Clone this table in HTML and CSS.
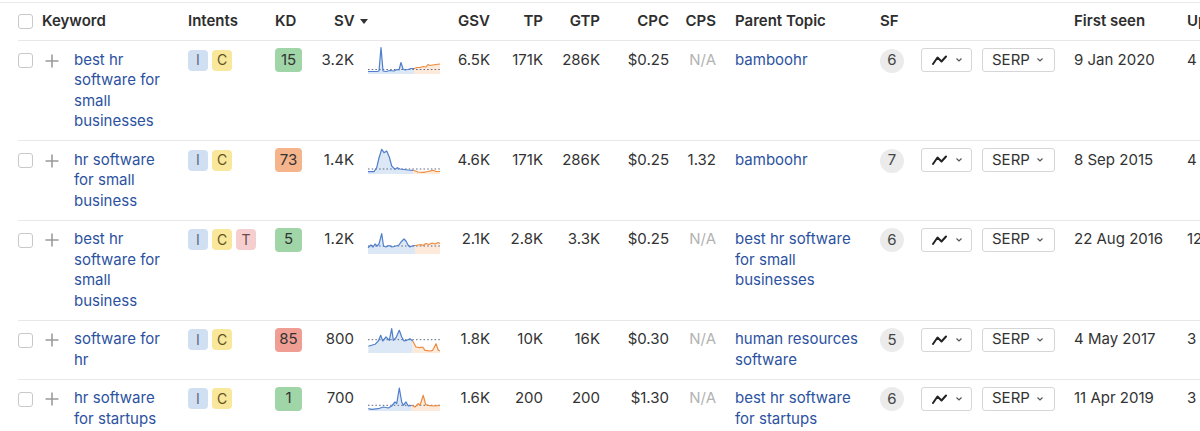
FILE: index.html
```html
<!DOCTYPE html>
<html lang="en">
<head>
<meta charset="utf-8">
<title>Keywords</title>
<link rel="stylesheet" href="styles.css">
</head>
<body>
<div class="page">
  <div class="table">
    <div class="row head">
      <div class="c sel span2"><span class="cb"></span><span>Keyword</span></div>
      <div class="c">Intents</div>
      <div class="c">KD</div>
      <div class="c sv-head span2">SV <svg class="sort" width="8" height="5" viewBox="0 0 8 5"><path d="M0 0H8L4 5Z" fill="#333"/></svg></div>
      <div class="c num">GSV</div>
      <div class="c num">TP</div>
      <div class="c num">GTP</div>
      <div class="c num">CPC</div>
      <div class="c num cps">CPS</div>
      <div class="c">Parent Topic</div>
      <div class="c">SF</div>
      <div class="c"></div>
      <div class="c"></div>
      <div class="c">First seen</div>
      <div class="c">Updated</div>
    </div>

    <!-- Row 1 -->
    <div class="row">
      <div class="c sel"><span class="cb"></span><svg class="plus" width="14" height="14" viewBox="0 0 14 14"><path d="M7 0.5V13.5M0.5 7H13.5" stroke="#9b9b9b" stroke-width="1.6"/></svg></div>
      <div class="c kw"><a href="#">best hr software for small businesses</a></div>
      <div class="c intents"><span class="it i">I</span><span class="it cc">C</span></div>
      <div class="c"><span class="kd green">15</span></div>
      <div class="c num">3.2K</div>
      <div class="c spark"><svg width="72" height="28" viewBox="0 0 72 28">
        <polygon class="fb" points="0,25.5 9,25.5 11,25 13,1.5 15,25 18,25.5 22,24.5 26,25 29,23.5 31,24 33,16.5 35,23 37,24 40,23.5 43,22.5 46,22.5 46,28 0,28"/>
        <polygon class="fo" points="46,22.5 49,21.5 52,21.5 55,20.5 58,21 60,18.5 62,19.5 65,19 68,18.5 72,18 72,28 46,28"/>
        <line class="dot" x1="0" y1="23.5" x2="72" y2="23.5"/>
        <polyline class="lb" points="0,25.5 9,25.5 11,25 13,1.5 15,25 18,25.5 22,24.5 26,25 29,23.5 31,24 33,16.5 35,23 37,24 40,23.5 43,22.5 46,22.5"/>
        <polyline class="lo" points="46,22.5 49,21.5 52,21.5 55,20.5 58,21 60,18.5 62,19.5 65,19 68,18.5 72,18"/>
      </svg></div>
      <div class="c num">6.5K</div>
      <div class="c num">171K</div>
      <div class="c num">286K</div>
      <div class="c num">$0.25</div>
      <div class="c num cps na">N/A</div>
      <div class="c parent"><a href="#">bamboohr</a></div>
      <div class="c"><span class="sf">6</span></div>
      <div class="c"><span class="btn chart"><svg width="15" height="10" viewBox="0 0 15 10"><polyline points="1,9 5.5,2.5 9.5,6.5 14,1.5" fill="none" stroke="#222" stroke-width="2" stroke-linejoin="round" stroke-linecap="round"/></svg><svg class="chev" width="6" height="4" viewBox="0 0 6 4"><polyline points="0.5,0.5 3,3 5.5,0.5" fill="none" stroke="#555" stroke-width="1.2"/></svg></span></div>
      <div class="c"><span class="btn serp">SERP<svg class="chev" width="6" height="4" viewBox="0 0 6 4"><polyline points="0.5,0.5 3,3 5.5,0.5" fill="none" stroke="#555" stroke-width="1.2"/></svg></span></div>
      <div class="c">9 Jan 2020</div>
      <div class="c">4 days</div>
    </div>

    <!-- Row 2 -->
    <div class="row">
      <div class="c sel"><span class="cb"></span><svg class="plus" width="14" height="14" viewBox="0 0 14 14"><path d="M7 0.5V13.5M0.5 7H13.5" stroke="#9b9b9b" stroke-width="1.6"/></svg></div>
      <div class="c kw"><a href="#">hr software for small business</a></div>
      <div class="c intents"><span class="it i">I</span><span class="it cc">C</span></div>
      <div class="c"><span class="kd orange">73</span></div>
      <div class="c num">1.4K</div>
      <div class="c spark"><svg width="72" height="28" viewBox="0 0 72 28">
        <polygon class="fb" points="0,25.7 6,25.7 8.7,21.7 11,12 13.7,3.3 16,6.7 18.7,5 21.3,11 23.7,20 27,23.3 29.3,21.7 32,23 36,23.5 40,24 45.3,24.3 45.3,28 0,28"/>
        <polygon class="fo" points="45.3,24.3 50,26 55,26.3 60,25.5 65,24.3 68,25.5 72,25.5 72,28 45.3,28"/>
        <line class="dot" x1="0" y1="23" x2="72" y2="23"/>
        <polyline class="lb" points="0,25.7 6,25.7 8.7,21.7 11,12 13.7,3.3 16,6.7 18.7,5 21.3,11 23.7,20 27,23.3 29.3,21.7 32,23 36,23.5 40,24 45.3,24.3"/>
        <polyline class="lo" points="45.3,24.3 50,26 55,26.3 60,25.5 65,24.3 68,25.5 72,25.5"/>
      </svg></div>
      <div class="c num">4.6K</div>
      <div class="c num">171K</div>
      <div class="c num">286K</div>
      <div class="c num">$0.25</div>
      <div class="c num cps">1.32</div>
      <div class="c parent"><a href="#">bamboohr</a></div>
      <div class="c"><span class="sf">7</span></div>
      <div class="c"><span class="btn chart"><svg width="15" height="10" viewBox="0 0 15 10"><polyline points="1,9 5.5,2.5 9.5,6.5 14,1.5" fill="none" stroke="#222" stroke-width="2" stroke-linejoin="round" stroke-linecap="round"/></svg><svg class="chev" width="6" height="4" viewBox="0 0 6 4"><polyline points="0.5,0.5 3,3 5.5,0.5" fill="none" stroke="#555" stroke-width="1.2"/></svg></span></div>
      <div class="c"><span class="btn serp">SERP<svg class="chev" width="6" height="4" viewBox="0 0 6 4"><polyline points="0.5,0.5 3,3 5.5,0.5" fill="none" stroke="#555" stroke-width="1.2"/></svg></span></div>
      <div class="c">8 Sep 2015</div>
      <div class="c">4 days</div>
    </div>

    <!-- Row 3 -->
    <div class="row">
      <div class="c sel"><span class="cb"></span><svg class="plus" width="14" height="14" viewBox="0 0 14 14"><path d="M7 0.5V13.5M0.5 7H13.5" stroke="#9b9b9b" stroke-width="1.6"/></svg></div>
      <div class="c kw"><a href="#">best hr software for small business</a></div>
      <div class="c intents"><span class="it i">I</span><span class="it cc">C</span><span class="it t">T</span></div>
      <div class="c"><span class="kd green">5</span></div>
      <div class="c num">1.2K</div>
      <div class="c spark"><svg width="72" height="28" viewBox="0 0 72 28">
        <polygon class="fb" points="0,21.7 3,19 5,21 7,18 9,20 11,18 13.7,7.7 15.5,20 18,21 21,19.5 24,21 28,20 31,19 33,16 36,13 38,15 40,19 42,21 44,20 47,19.5 47,28 0,28"/>
        <polygon class="fo" points="47,19.5 50,19 53,18.5 55,19.5 58,17.5 61,18.5 64,17 67,18 70,16.5 72,17.5 72,28 47,28"/>
        <line class="dot" x1="0" y1="20" x2="72" y2="20"/>
        <polyline class="lb" points="0,21.7 3,19 5,21 7,18 9,20 11,18 13.7,7.7 15.5,20 18,21 21,19.5 24,21 28,20 31,19 33,16 36,13 38,15 40,19 42,21 44,20 47,19.5"/>
        <polyline class="lo" points="47,19.5 50,19 53,18.5 55,19.5 58,17.5 61,18.5 64,17 67,18 70,16.5 72,17.5"/>
      </svg></div>
      <div class="c num">2.1K</div>
      <div class="c num">2.8K</div>
      <div class="c num">3.3K</div>
      <div class="c num">$0.25</div>
      <div class="c num cps na">N/A</div>
      <div class="c parent"><a href="#">best hr software for small businesses</a></div>
      <div class="c"><span class="sf">6</span></div>
      <div class="c"><span class="btn chart"><svg width="15" height="10" viewBox="0 0 15 10"><polyline points="1,9 5.5,2.5 9.5,6.5 14,1.5" fill="none" stroke="#222" stroke-width="2" stroke-linejoin="round" stroke-linecap="round"/></svg><svg class="chev" width="6" height="4" viewBox="0 0 6 4"><polyline points="0.5,0.5 3,3 5.5,0.5" fill="none" stroke="#555" stroke-width="1.2"/></svg></span></div>
      <div class="c"><span class="btn serp">SERP<svg class="chev" width="6" height="4" viewBox="0 0 6 4"><polyline points="0.5,0.5 3,3 5.5,0.5" fill="none" stroke="#555" stroke-width="1.2"/></svg></span></div>
      <div class="c">22 Aug 2016</div>
      <div class="c">12 days</div>
    </div>

    <!-- Row 4 -->
    <div class="row">
      <div class="c sel"><span class="cb"></span><svg class="plus" width="14" height="14" viewBox="0 0 14 14"><path d="M7 0.5V13.5M0.5 7H13.5" stroke="#9b9b9b" stroke-width="1.6"/></svg></div>
      <div class="c kw"><a href="#">software for hr</a></div>
      <div class="c intents"><span class="it i">I</span><span class="it cc">C</span></div>
      <div class="c"><span class="kd red">85</span></div>
      <div class="c num">800</div>
      <div class="c spark"><svg width="72" height="28" viewBox="0 0 72 28">
        <polygon class="fb" points="0.3,20.3 7,18.3 10.3,15 12.7,9.3 14.7,15 18,11 21.3,14.3 23.7,2.7 25.3,14.3 28,11.7 31.3,4.3 33.7,11 36,15 38.7,14.3 42,12.7 44.7,15 44.7,27 0.3,27"/>
        <polygon class="fo" points="44.7,15 48,21 51.3,21.7 54.7,21 57,24.3 62,25 64.7,24.3 68,17.7 70.3,24.3 72,25 72,27 44.7,27"/>
        <line class="dot" x1="0" y1="13.7" x2="72" y2="13.7"/>
        <polyline class="lb" points="0.3,20.3 7,18.3 10.3,15 12.7,9.3 14.7,15 18,11 21.3,14.3 23.7,2.7 25.3,14.3 28,11.7 31.3,4.3 33.7,11 36,15 38.7,14.3 42,12.7 44.7,15"/>
        <polyline class="lo" points="44.7,15 48,21 51.3,21.7 54.7,21 57,24.3 62,25 64.7,24.3 68,17.7 70.3,24.3 72,25"/>
      </svg></div>
      <div class="c num">1.8K</div>
      <div class="c num">10K</div>
      <div class="c num">16K</div>
      <div class="c num">$0.30</div>
      <div class="c num cps na">N/A</div>
      <div class="c parent"><a href="#">human resources software</a></div>
      <div class="c"><span class="sf">5</span></div>
      <div class="c"><span class="btn chart"><svg width="15" height="10" viewBox="0 0 15 10"><polyline points="1,9 5.5,2.5 9.5,6.5 14,1.5" fill="none" stroke="#222" stroke-width="2" stroke-linejoin="round" stroke-linecap="round"/></svg><svg class="chev" width="6" height="4" viewBox="0 0 6 4"><polyline points="0.5,0.5 3,3 5.5,0.5" fill="none" stroke="#555" stroke-width="1.2"/></svg></span></div>
      <div class="c"><span class="btn serp">SERP<svg class="chev" width="6" height="4" viewBox="0 0 6 4"><polyline points="0.5,0.5 3,3 5.5,0.5" fill="none" stroke="#555" stroke-width="1.2"/></svg></span></div>
      <div class="c">4 May 2017</div>
      <div class="c">3 days</div>
    </div>

    <!-- Row 5 -->
    <div class="row">
      <div class="c sel"><span class="cb"></span><svg class="plus" width="14" height="14" viewBox="0 0 14 14"><path d="M7 0.5V13.5M0.5 7H13.5" stroke="#9b9b9b" stroke-width="1.6"/></svg></div>
      <div class="c kw"><a href="#">hr software for startups</a></div>
      <div class="c intents"><span class="it i">I</span><span class="it cc">C</span></div>
      <div class="c"><span class="kd green">1</span></div>
      <div class="c num">700</div>
      <div class="c spark"><svg width="72" height="28" viewBox="0 0 72 28">
        <polygon class="fb" points="0.3,23.7 3.7,24.3 10.3,23.7 15.3,22 20.3,23 23.7,21 27,17 28.7,18.7 31.3,3 33.7,17 35.3,20.3 38,17 40.3,21 43.7,20.3 43.7,26 0.3,26"/>
        <polygon class="fo" points="43.7,20.3 47,22 50.3,18.7 52,20.3 55.3,10.3 57.7,19.7 60.3,20.3 65.3,21 72,20.3 72,26 43.7,26"/>
        <line class="dot" x1="0" y1="20.3" x2="72" y2="20.3"/>
        <polyline class="lb" points="0.3,23.7 3.7,24.3 10.3,23.7 15.3,22 20.3,23 23.7,21 27,17 28.7,18.7 31.3,3 33.7,17 35.3,20.3 38,17 40.3,21 43.7,20.3"/>
        <polyline class="lo" points="43.7,20.3 47,22 50.3,18.7 52,20.3 55.3,10.3 57.7,19.7 60.3,20.3 65.3,21 72,20.3"/>
      </svg></div>
      <div class="c num">1.6K</div>
      <div class="c num">200</div>
      <div class="c num">200</div>
      <div class="c num">$1.30</div>
      <div class="c num cps na">N/A</div>
      <div class="c parent"><a href="#">best hr software for startups</a></div>
      <div class="c"><span class="sf">6</span></div>
      <div class="c"><span class="btn chart"><svg width="15" height="10" viewBox="0 0 15 10"><polyline points="1,9 5.5,2.5 9.5,6.5 14,1.5" fill="none" stroke="#222" stroke-width="2" stroke-linejoin="round" stroke-linecap="round"/></svg><svg class="chev" width="6" height="4" viewBox="0 0 6 4"><polyline points="0.5,0.5 3,3 5.5,0.5" fill="none" stroke="#555" stroke-width="1.2"/></svg></span></div>
      <div class="c"><span class="btn serp">SERP<svg class="chev" width="6" height="4" viewBox="0 0 6 4"><polyline points="0.5,0.5 3,3 5.5,0.5" fill="none" stroke="#555" stroke-width="1.2"/></svg></span></div>
      <div class="c">11 Apr 2019</div>
      <div class="c">3 days</div>
    </div>
  </div>
</div>
</body>
</html>
```

FILE: styles.css
```css
* { box-sizing: border-box; }

html, body {
  margin: 0;
  padding: 0;
  background: #ffffff;
  overflow: hidden;
}

body {
  font-family: Inter, "Noto Sans", "Liberation Sans", sans-serif;
  font-size: 15px;
  color: #333333;
}

.page {
  margin-top: 2px;
  border-top: 1px solid #ececec;
  width: 1300px;
}

.table {
  margin-left: 18px;
  width: 1242px;
}

.row {
  display: grid;
  grid-template-columns: 48px 114px 87px 43px 52px 86px 50px 53px 57px 69px 50px 145px 41px 61px 92px 113px 81px;
  border-bottom: 1px solid #e8e8e8;
  align-items: start;
}

.c {
  padding: 8.5px 8px;
  line-height: 20.5px;
  white-space: nowrap;
  overflow: visible;
}

.head {
  height: 38px;
  align-items: center;
}

.head .c {
  padding-top: 0;
  padding-bottom: 0;
  font-weight: 600;
  color: #2e2e2e;
}

.span2 { grid-column: span 2; }

.sel {
  display: flex;
  align-items: center;
  padding-left: 0;
  padding-right: 0;
  height: 37.5px;
}

.head .sel { gap: 9px; height: auto; }

.row:not(.head) .sel { gap: 12px; padding-top: 12px; padding-bottom: 0; height: auto; }

.cb {
  display: inline-block;
  width: 15px;
  height: 15px;
  border: 1px solid #c9c9c9;
  border-radius: 3px;
  background: #fff;
  flex: none;
}

.plus { flex: none; display: block; }

.sv-head {
  padding-left: 24px;
  display: flex;
  align-items: center;
  gap: 5px;
}

.sort { display: block; }

.num { text-align: right; }

.cps { padding-right: 11px; }

.na { color: #b3b3b3; }

.kw, .parent { white-space: normal; }

.kw { padding-right: 14px; }

a {
  color: #2c52a0;
  text-decoration: none;
}

.intents {
  display: flex;
  gap: 4px;
}

.it {
  display: inline-flex;
  align-items: center;
  justify-content: center;
  width: 20px;
  height: 21px;
  border-radius: 4px;
  font-size: 14px;
  line-height: 1;
}

.it.i { background: #d0e0f2; color: #5b6b80; }
.it.cc { background: #f9e79c; color: #5e5223; }
.it.t { background: #f5cfcf; color: #6f4a4a; }

.kd {
  display: flex;
  align-items: center;
  justify-content: center;
  width: 27px;
  height: 24px;
  margin-top: -1.5px;
  border-radius: 4px;
  color: #333;
}

.kd.green { background: #a0d5a8; }
.kd.orange { background: #f5b48c; }
.kd.red { background: #f09e94; }

.spark { padding-left: 6px; padding-right: 0; }

.spark svg {
  display: block;
  margin-top: -3.5px;
  overflow: visible;
}

.fb { fill: #dde8f7; stroke: none; }
.fo { fill: #fdeadb; stroke: none; }
.dot { stroke: #5b6680; stroke-width: 1; stroke-dasharray: 1.5 2.2; }
.lb { fill: none; stroke: #4f7fcb; stroke-width: 1.2; stroke-linejoin: round; }
.lo { fill: none; stroke: #ee8a3e; stroke-width: 1.2; stroke-linejoin: round; }

.sf {
  display: flex;
  align-items: center;
  justify-content: center;
  width: 24px;
  height: 24px;
  margin-top: -1px;
  border-radius: 50%;
  background: #ebebeb;
  color: #444;
}

.btn {
  display: flex;
  align-items: center;
  height: 24px;
  margin-top: -1.5px;
  border: 1px solid #d6d6d6;
  border-radius: 3px;
  background: #fff;
  color: #333;
}

.btn.chart {
  width: 51px;
  padding-left: 10px;
  gap: 9px;
}

.btn.chart svg { display: block; }

.btn.serp {
  width: 73px;
  padding-left: 9px;
  gap: 7px;
}

.chev { display: block; flex: none; }
```
